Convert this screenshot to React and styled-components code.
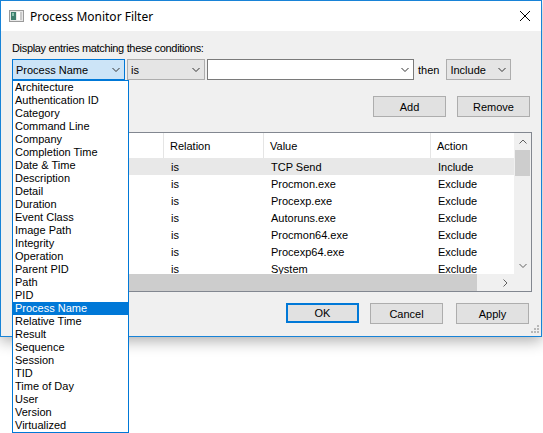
import React from 'react';
import styled, { createGlobalStyle, css } from 'styled-components';

const GlobalStyle = createGlobalStyle`
  html, body {
    margin: 0;
    padding: 0;
    background: #ffffff;
  }
  body {
    font-family: "Liberation Sans", Arial, sans-serif;
    font-size: 11px;
    color: #000;
  }
`;

const FIELDS = [
  'Architecture',
  'Authentication ID',
  'Category',
  'Command Line',
  'Company',
  'Completion Time',
  'Date & Time',
  'Description',
  'Detail',
  'Duration',
  'Event Class',
  'Image Path',
  'Integrity',
  'Operation',
  'Parent PID',
  'Path',
  'PID',
  'Process Name',
  'Relative Time',
  'Result',
  'Sequence',
  'Session',
  'TID',
  'Time of Day',
  'User',
  'Version',
  'Virtualized',
];

// first column sits under the open drop-down, so it is left blank
const RULES = [
  ['is', 'TCP Send', 'Include'],
  ['is', 'Procmon.exe', 'Exclude'],
  ['is', 'Procexp.exe', 'Exclude'],
  ['is', 'Autoruns.exe', 'Exclude'],
  ['is', 'Procmon64.exe', 'Exclude'],
  ['is', 'Procexp64.exe', 'Exclude'],
  ['is', 'System', 'Exclude'],
];

const COLS = '151px 100px 167px 120px';

const Page = styled.div`
  width: 543px;
  height: 433px;
  position: relative;
  overflow: hidden;
`;

const Window = styled.div`
  width: 542px;
  box-sizing: border-box;
  border: 1px solid #1883d7;
  background: #f0f0f0;
  box-shadow: 0 4px 14px rgba(0, 0, 0, 0.32);
  display: flex;
  flex-direction: column;
`;

const TitleBar = styled.div`
  height: 30px;
  background: #ffffff;
  display: flex;
  align-items: center;
  padding: 0 9px 0 8px;
`;

const Title = styled.span`
  font-family: "Noto Sans", "Open Sans", sans-serif;
  font-size: 12px;
  margin-left: 6px;
  flex: 1;
`;

const CloseButton = styled.div`
  width: 12px;
  height: 12px;
  display: flex;
  margin-right: 1px;
`;

const Client = styled.div`
  position: relative;
  display: flex;
  flex-direction: column;
  padding: 11px 10px 12px 11px;
`;

const Label = styled.div`
  line-height: 13px;
  height: 13px;
  letter-spacing: -0.33px;
`;

const ConditionRow = styled.div`
  display: flex;
  align-items: center;
  gap: 2px;
  margin-top: 4px;
  height: 21px;
`;

const comboVariants = {
  focused: css`
    background: #cce4f7;
    border-color: #0078d7;
  `,
  button: css`
    background: #e5e5e5;
    border-color: #adadad;
  `,
  edit: css`
    background: #ffffff;
    border-color: #7a7a7a;
  `,
};

const ComboWrap = styled.div`
  position: relative;
`;

const Combo = styled.div`
  box-sizing: border-box;
  height: 21px;
  width: ${(p) => p.$width}px;
  border: 1px solid;
  display: flex;
  align-items: center;
  padding: 0 4px 0 3px;
  ${(p) => comboVariants[p.$variant]};
`;

const ComboText = styled.span`
  flex: 1;
`;

const Then = styled.span`
  margin: 0 5px 0 2px;
`;

const DropList = styled.ul`
  position: absolute;
  top: 21px;
  left: 0;
  width: 117px;
  box-sizing: border-box;
  margin: 0;
  padding: 0;
  list-style: none;
  background: #ffffff;
  border: 1px solid #0078d7;
  z-index: 5;
`;

const DropItem = styled.li`
  height: 13px;
  line-height: 13px;
  padding-left: 2px;
  white-space: nowrap;
  ${(p) =>
    p.$selected &&
    css`
      background: #0078d7;
      color: #ffffff;
    `};
`;

const ButtonRow = styled.div`
  display: flex;
  justify-content: flex-end;
  gap: 11px;
  margin-top: ${(p) => p.$top}px;
  padding-right: ${(p) => p.$right || 0}px;
`;

const Button = styled.div`
  box-sizing: border-box;
  width: 73px;
  height: ${(p) => (p.$default ? 20 : 21)}px;
  background: #e1e1e1;
  border: ${(p) => (p.$default ? '2px solid #0078d7' : '1px solid #adadad')};
  display: flex;
  align-items: center;
  justify-content: center;
  margin-left: ${(p) => p.$gap || 0}px;
`;

const ListView = styled.div`
  margin-top: 15px;
  width: 520px;
  height: 160px;
  box-sizing: border-box;
  border: 1px solid #828790;
  background: #ffffff;
  display: grid;
  grid-template-columns: 1fr 17px;
  grid-template-rows: 1fr 17px;
`;

const ListBody = styled.div`
  overflow: hidden;
`;

const HeaderRow = styled.div`
  display: grid;
  grid-template-columns: ${COLS};
  height: 25px;
`;

const HeaderCell = styled.div`
  display: flex;
  align-items: center;
  padding-left: 6px;
  border-right: 1px solid #e5e5e5;
  white-space: nowrap;
`;

const Row = styled.div`
  display: grid;
  grid-template-columns: ${COLS};
  height: 17px;
  align-items: center;
  background: ${(p) => (p.$hot ? '#e8e8e8' : 'transparent')};
`;

const Cell = styled.div`
  padding-left: 7px;
  white-space: nowrap;
  overflow: hidden;
`;

const VScroll = styled.div`
  background: #f0f0f0;
  display: flex;
  flex-direction: column;
  align-items: center;
`;

const ScrollArrow = styled.div`
  height: 17px;
  width: 17px;
  display: flex;
  align-items: center;
  justify-content: center;
`;

const VThumb = styled.div`
  width: 15px;
  height: 26px;
  background: #cdcdcd;
`;

const Track = styled.div`
  flex: 1;
`;

const HScroll = styled.div`
  background: #f0f0f0;
  display: flex;
`;

const HThumb = styled.div`
  width: 464px;
  background: #cdcdcd;
`;

const Corner = styled.div`
  background: #f0f0f0;
`;

const Grip = styled.div`
  position: absolute;
  right: 1px;
  bottom: 2px;
  width: 10px;
  height: 10px;
`;

const Chevron = ({ dir = 'down', color = '#333' }) => {
  const pts = {
    down: '0.5,1 4,4.5 7.5,1',
    up: '0.5,4.5 4,1 7.5,4.5',
    right: '1.5,0.5 5,4 1.5,7.5',
  }[dir];
  const w = dir === 'right' ? 7 : 8;
  const h = dir === 'right' ? 8 : 6;
  return (
    <svg width={w} height={h} viewBox={`0 0 ${w} ${h}`}>
      <polyline points={pts} fill="none" stroke={color} strokeWidth="1" />
    </svg>
  );
};

const AppIcon = () => (
  <svg width="15" height="12" viewBox="0 0 15 12">
    <rect x="0.5" y="0.5" width="14" height="11" fill="#e8e8e8" stroke="#9a9a9a" />
    <rect x="2" y="2" width="5" height="8" fill="#3f7f6f" />
    <rect x="3" y="3" width="2" height="3" fill="#8cc4b0" />
    <rect x="8" y="2" width="5" height="8" fill="#ffffff" />
    <rect x="11" y="2" width="2" height="8" fill="#c9c9c9" />
  </svg>
);

const CloseIcon = () => (
  <svg width="12" height="12" viewBox="0 0 12 12">
    <path d="M1 1 L11 11 M11 1 L1 11" stroke="#000" strokeWidth="1" />
  </svg>
);

const GripIcon = () => (
  <svg width="10" height="10" viewBox="0 0 10 10" fill="#b8b8b8">
    <rect x="7" y="1" width="2" height="2" />
    <rect x="4" y="4" width="2" height="2" />
    <rect x="7" y="4" width="2" height="2" />
    <rect x="1" y="7" width="2" height="2" />
    <rect x="4" y="7" width="2" height="2" />
    <rect x="7" y="7" width="2" height="2" />
  </svg>
);

export default function App() {
  return (
    <Page>
      <GlobalStyle />
      <Window>
        <TitleBar>
          <AppIcon />
          <Title>Process Monitor Filter</Title>
          <CloseButton>
            <CloseIcon />
          </CloseButton>
        </TitleBar>
        <Client>
          <Label>Display entries matching these conditions:</Label>
          <ConditionRow>
            <ComboWrap>
              <Combo $variant="focused" $width={113}>
                <ComboText>Process Name</ComboText>
                <Chevron />
              </Combo>
              <DropList>
                {FIELDS.map((f) => (
                  <DropItem key={f} $selected={f === 'Process Name'}>
                    {f}
                  </DropItem>
                ))}
              </DropList>
            </ComboWrap>
            <Combo $variant="button" $width={78}>
              <ComboText>is</ComboText>
              <Chevron />
            </Combo>
            <Combo $variant="edit" $width={207}>
              <ComboText />
              <Chevron />
            </Combo>
            <Then>then</Then>
            <Combo $variant="button" $width={65}>
              <ComboText>Include</ComboText>
              <Chevron />
            </Combo>
          </ConditionRow>
          <ButtonRow $top={16} $right={1}>
            <Button>Add</Button>
            <Button>Remove</Button>
          </ButtonRow>
          <ListView>
            <ListBody>
              <HeaderRow>
                <HeaderCell />
                <HeaderCell>Relation</HeaderCell>
                <HeaderCell>Value</HeaderCell>
                <HeaderCell>Action</HeaderCell>
              </HeaderRow>
              {RULES.map((r, i) => (
                <Row key={i} $hot={i === 0}>
                  <Cell />
                  {r.map((c, j) => (
                    <Cell key={j}>{c}</Cell>
                  ))}
                </Row>
              ))}
            </ListBody>
            <VScroll>
              <ScrollArrow>
                <Chevron dir="up" color="#606060" />
              </ScrollArrow>
              <VThumb />
              <Track />
              <ScrollArrow>
                <Chevron color="#606060" />
              </ScrollArrow>
            </VScroll>
            <HScroll>
              <HThumb />
              <Track />
              <ScrollArrow>
                <Chevron dir="right" color="#606060" />
              </ScrollArrow>
            </HScroll>
            <Corner />
          </ListView>
          <ButtonRow $top={11} $right={2}>
            <Button $default>OK</Button>
            <Button>Cancel</Button>
            <Button $gap={2}>Apply</Button>
          </ButtonRow>
          <Grip>
            <GripIcon />
          </Grip>
        </Client>
      </Window>
    </Page>
  );
}
